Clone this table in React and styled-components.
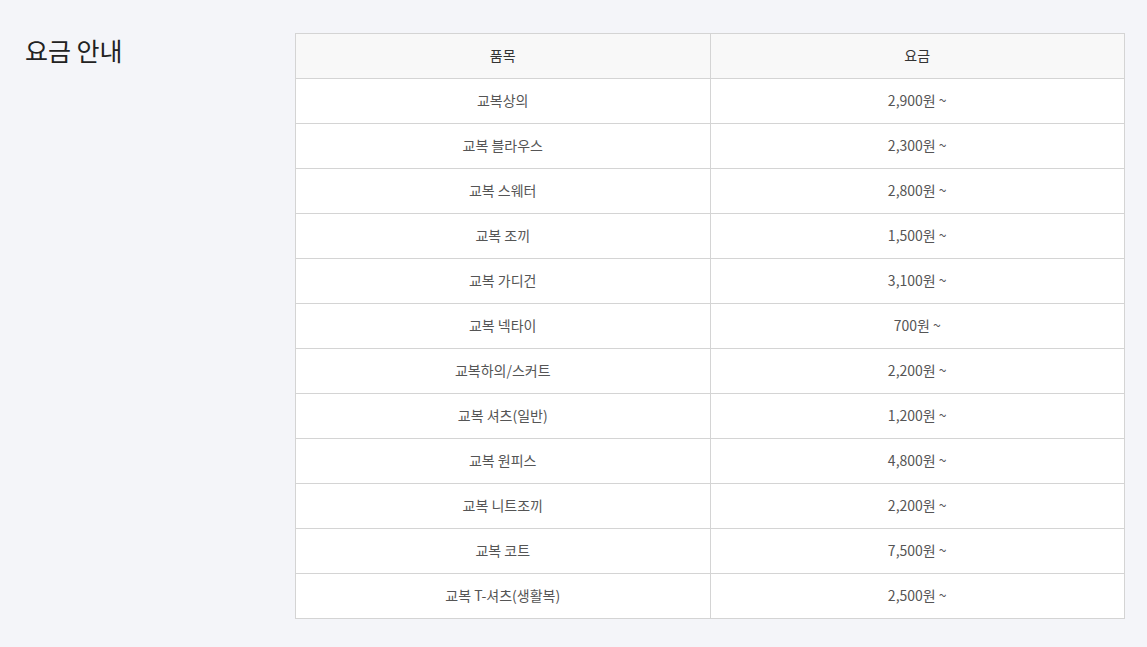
import React from 'react';
import styled, { createGlobalStyle } from 'styled-components';

const GlobalStyle = createGlobalStyle`
  html, body {
    margin: 0;
    padding: 0;
    background: #f4f5f9;
    font-family: "Noto Sans CJK KR", "Noto Sans", sans-serif;
  }
`;

const Page = styled.div`
  display: flex;
  align-items: flex-start;
  padding: 33px 22px 28px 25px;
`;

const Title = styled.h2`
  width: 270px;
  flex-shrink: 0;
  margin: 0;
  font-size: 25px;
  font-weight: 400;
  line-height: 34px;
  color: #222;
`;

const PriceTable = styled.table`
  flex: 1;
  border-collapse: collapse;
  table-layout: fixed;
  background: #fff;
  border: 1px solid #d4d4d4;
`;

const HeadCell = styled.th`
  width: 50%;
  height: 41px;
  padding: 0 0 3px;
  border: 1px solid #d4d4d4;
  background: #f8f8f8;
  font-size: 14px;
  font-weight: 400;
  color: #333;
  text-align: center;
`;

const Cell = styled.td`
  height: 41px;
  padding: 0 0 3px;
  border: 1px solid #d4d4d4;
  font-size: 14px;
  color: #555;
  text-align: center;
`;

const prices = [
  ['교복상의', '2,900원 ~'],
  ['교복 블라우스', '2,300원 ~'],
  ['교복 스웨터', '2,800원 ~'],
  ['교복 조끼', '1,500원 ~'],
  ['교복 가디건', '3,100원 ~'],
  ['교복 넥타이', '700원 ~'],
  ['교복하의/스커트', '2,200원 ~'],
  ['교복 셔츠(일반)', '1,200원 ~'],
  ['교복 원피스', '4,800원 ~'],
  ['교복 니트조끼', '2,200원 ~'],
  ['교복 코트', '7,500원 ~'],
  ['교복 T-셔츠(생활복)', '2,500원 ~'],
];

const App = () => {
  return (
    <Page>
      <GlobalStyle />
      <Title>요금 안내</Title>
      <PriceTable>
        <thead>
          <tr>
            <HeadCell>품목</HeadCell>
            <HeadCell>요금</HeadCell>
          </tr>
        </thead>
        <tbody>
          {prices.map(([item, price]) => (
            <tr key={item}>
              <Cell>{item}</Cell>
              <Cell>{price}</Cell>
            </tr>
          ))}
        </tbody>
      </PriceTable>
    </Page>
  );
};

export default App;
